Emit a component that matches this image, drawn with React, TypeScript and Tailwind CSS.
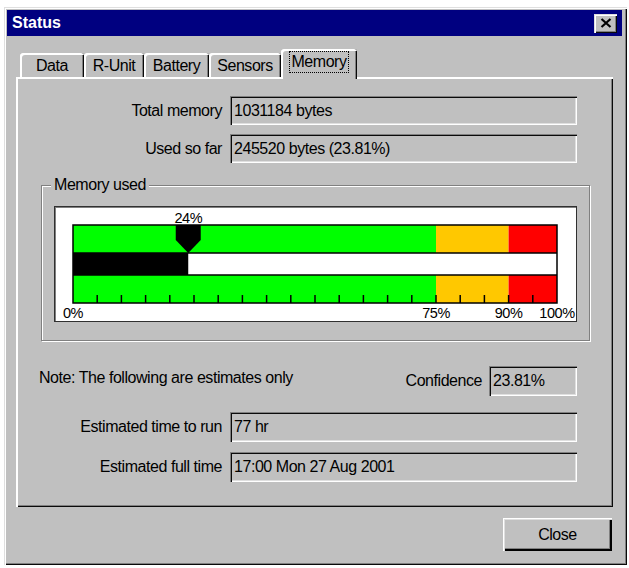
import React from 'react';

const raised =
  'shadow-[inset_1px_1px_#dfdfdf,inset_2px_2px_#ffffff,inset_-1px_-1px_#0a0a0a,inset_-2px_-2px_#808080]';
const sunken =
  'shadow-[inset_1px_1px_#808080,inset_2px_2px_#0a0a0a,inset_-1px_-1px_#ffffff,inset_-2px_-2px_#dfdfdf]';

const tabs = [
  { label: 'Data', w: 'w-[64px]' },
  { label: 'R-Unit', w: 'w-[60px]' },
  { label: 'Battery', w: 'w-[65px]' },
  { label: 'Sensors', w: 'w-[72px]' },
  { label: 'Memory', w: 'w-[76px]', active: true },
];

function Field({ value, className = '' }: { value: string; className?: string }) {
  return (
    <div className={`h-full bg-[#c0c0c0] flex items-center pl-[4px] ${sunken} ${className}`}>
      {value}
    </div>
  );
}

function Row({ label, value, className = '' }: { label: string; value: string; className?: string }) {
  return (
    <div className={`flex items-center h-[30px] ${className}`}>
      <div className="w-[206px] text-right">{label}</div>
      <Field value={value} className="ml-[8px] w-[347px]" />
    </div>
  );
}

function Gauge({ pct }: { pct: number }) {
  const x0 = 18;
  const w = 484;
  const at = (p: number) => x0 + (w * p) / 100;
  const v = at(pct);
  const ticks = Array.from({ length: 19 }, (_, i) => at((i + 1) * 5));
  const band = (y: number) => (
    <>
      <rect x={x0} y={y} width={at(75) - x0} height={28} fill="#00ff00" />
      <rect x={at(75)} y={y} width={at(90) - at(75)} height={28} fill="#ffc800" />
      <rect x={at(90)} y={y} width={at(100) - at(90)} height={28} fill="#ff0000" />
    </>
  );
  return (
    <svg width="521" height="114" viewBox="0 0 521 114" className="block">
      {band(18)}
      <rect x={x0} y={46} width={w} height={22} fill="#ffffff" />
      <rect x={x0} y={46} width={v - x0} height={22} fill="#000000" />
      {band(68)}
      <rect x={x0} y={18} width={w} height={78} fill="none" stroke="#000" strokeWidth="1.5" />
      <line x1={x0} y1={46} x2={x0 + w} y2={46} stroke="#000" strokeWidth="1.5" />
      <line x1={x0} y1={68} x2={x0 + w} y2={68} stroke="#000" strokeWidth="1.5" />
      {ticks.map((t) => (
        <line key={t} x1={t} y1={88} x2={t} y2={96} stroke="#000" strokeWidth="1.5" />
      ))}
      <polygon
        points={`${v - 12.5},18 ${v + 12.5},18 ${v + 12.5},33 ${v},46 ${v - 12.5},33`}
        fill="#000"
      />
      <g fontSize="14.5" fontFamily="'Liberation Sans', Arial, sans-serif" textAnchor="middle" fill="#000">
        <text x={v} y={16}>{Math.round(pct)}%</text>
        <text x={at(0)} y={111}>0%</text>
        <text x={at(75)} y={111}>75%</text>
        <text x={at(90)} y={111}>90%</text>
        <text x={at(100)} y={111}>100%</text>
      </g>
    </svg>
  );
}

export default function App() {
  return (
    <div className="min-h-screen bg-white pt-[7px] pl-[4px] font-['Liberation_Sans',Arial,sans-serif] text-[16px] tracking-[-0.45px] text-black">
      <div
        className={`w-[623px] h-[558px] bg-[#c0c0c0] pl-[3px] pt-[3px] pr-[5px] pb-[3px] ${raised}`}
      >
        {/* Title bar */}
        <div className="h-[26px] bg-[#000080] flex items-center justify-between pl-[5px] pr-[5px]">
          <span className="text-white font-bold text-[16px] tracking-normal leading-none">Status</span>
          <button
            className={`w-[23px] h-[19px] bg-[#c0c0c0] flex items-center justify-center ${raised}`}
          >
            <svg width="12" height="10" viewBox="0 0 12 10">
              <path d="M1.5 1 L10.5 9 M10.5 1 L1.5 9" stroke="#000" strokeWidth="2.2" />
            </svg>
          </button>
        </div>

        <div className="pl-[9px]">
          {/* Tabs */}
          <div className="relative z-10 flex items-end h-[28px] mt-[13px] pl-[4px]">
            {tabs.map((t) =>
              t.active ? (
                <div
                  key={t.label}
                  className={`${t.w} h-[30px] -mb-[2px] bg-[#c0c0c0] rounded-t-[3px] flex items-center justify-center pb-[4px] shadow-[inset_2px_2px_#ffffff,inset_-1px_0_#0a0a0a,inset_-2px_0_#808080]`}
                >
                  <span className="border border-dotted border-black px-[1px] leading-[20px]">
                    {t.label}
                  </span>
                </div>
              ) : (
                <div
                  key={t.label}
                  className={`${t.w} h-[24px] bg-[#c0c0c0] rounded-t-[3px] flex items-center justify-center pt-[2px] shadow-[inset_2px_2px_#ffffff,inset_-1px_0_#0a0a0a,inset_-2px_0_#808080]`}
                >
                  {t.label}
                </div>
              ),
            )}
          </div>

          {/* Panel */}
          <div
            className={`w-[597px] h-[430px] bg-[#c0c0c0] pt-[19px] shadow-[inset_2px_2px_#ffffff,inset_-1px_-1px_#0a0a0a,inset_-2px_-2px_#808080]`}
          >
            <Row label="Total memory" value="1031184 bytes" className="!h-[29px]" />
            <Row label="Used so far" value="245520 bytes (23.81%)" className="mt-[9px] !h-[29px]" />

            <div className="relative mt-[22px] ml-[25px] w-[549px] h-[156px] border border-[#808080] shadow-[inset_1px_1px_#ffffff,1px_1px_#ffffff]">
              <span className="absolute -top-[11px] left-[9px] bg-[#c0c0c0] px-[3px] leading-[20px]">
                Memory used
              </span>
              <div className="mt-[20px] ml-[12px] w-[523px] h-[116px] bg-white border border-[#303030] shadow-[inset_1px_1px_#808080]">
                <Gauge pct={23.81} />
              </div>
            </div>

            <div className="flex items-center h-[30px] mt-[25px]">
              <div className="ml-[23px] -mt-[6px]">Note: The following are estimates only</div>
              <div className="ml-auto">Confidence</div>
              <Field value="23.81%" className="ml-[7px] w-[88px] mr-[36px]" />
            </div>

            <Row label="Estimated time to run" value="77 hr" className="mt-[16px]" />
            <Row label="Estimated full time" value="17:00 Mon 27 Aug 2001" className="mt-[10px]" />
          </div>

          {/* Footer */}
          <div className="flex justify-end w-[597px] mt-[11px]">
            <button
              className="w-[109px] h-[33px] mr-[1px] bg-[#c0c0c0] flex items-center justify-center shadow-[inset_1px_1px_#ffffff,inset_2px_2px_#dfdfdf,inset_-1px_-1px_#000000,inset_-2px_-2px_#000000,inset_-3px_-3px_#808080]"
            >
              Close
            </button>
          </div>
        </div>
      </div>
    </div>
  );
}
